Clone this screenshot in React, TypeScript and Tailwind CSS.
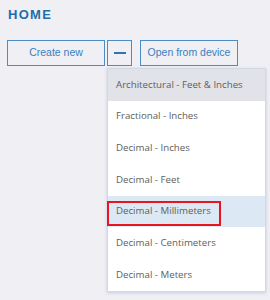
import { useState } from 'react';

const UNITS = [
  'Architectural - Feet & Inches',
  'Fractional - Inches',
  'Decimal - Inches',
  'Decimal - Feet',
  'Decimal - Millimeters',
  'Decimal - Centimeters',
  'Decimal - Meters'
];

export default function App() {
  const [selected, setSelected] = useState('Decimal - Millimeters');

  return (
    <div className="relative h-[300px] w-[270px] overflow-hidden bg-[#efeff4] font-['Liberation_Sans',sans-serif]">
      <h1 className="px-[8px] pt-[7px] text-[13px] font-bold leading-[16px] tracking-[1.3px] text-[#1f6dab]">HOME</h1>
      <div className="mt-[17px] flex items-center px-[7px]">
        <button
          className="h-[26px] w-[98px] border border-[#4a8cc4] text-[10.5px] text-[#3a7fbe]"
          type="button"
        >
          Create new
        </button>
        <button
          className="ml-[2px] flex h-[26px] w-[25px] items-center justify-center border border-[#4a8cc4]"
          type="button"
        >
          <span className="h-[1.5px] w-[12px] bg-[#2f75b5]" />
        </button>
        <button
          className="ml-[8px] h-[26px] w-[98px] border border-[#4a8cc4] text-[10.5px] text-[#3a7fbe]"
          type="button"
        >
          Open from device
        </button>
      </div>

      <ul className="absolute left-[107px] top-[68px] w-[159px] border border-[#cfdae6] bg-white font-['Open_Sans',sans-serif] shadow-[0_1px_3px_rgba(120,150,190,0.35)]">
        {UNITS.map((unit, index) => {
          const active = unit === selected;
          return (
            <li
              key={unit}
              className={`flex h-[31.7px] items-center px-[8px] text-[9.7px] text-[#5e5e5e] ${
                index === 0 ? 'bg-[#e2e2e9]' : active ? 'bg-[#dce9f5]' : ''
              }`}
              onClick={() => setSelected(unit)}
            >
              {unit}
            </li>
          );
        })}
      </ul>
      {/* red annotation frame */}
      <div className="pointer-events-none absolute left-[107px] top-[201px] h-[25px] w-[114px] border-2 border-[#e8141e]" />
    </div>
  );
}
